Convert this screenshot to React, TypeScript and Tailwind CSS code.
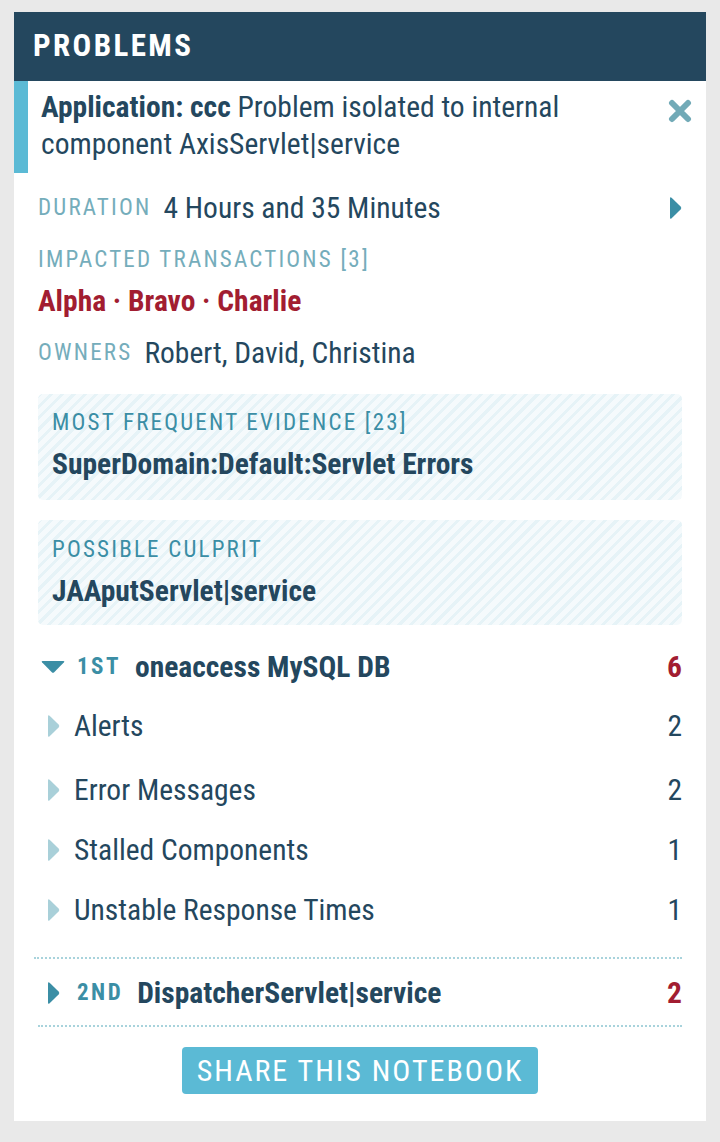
import React from "react";

const font = "font-['Roboto','Liberation_Sans',sans-serif] font-stretch-condensed";

function RightTri({ className }: { className: string }) {
  return (
    <svg width="14" height="24" viewBox="0 0 14 24" className={className}>
      <path d="M2 2.5 Q2 0.5 3.6 1.8 L12.6 10.6 Q14 12 12.6 13.4 L3.6 22.2 Q2 23.5 2 21.5 Z" fill="currentColor" />
    </svg>
  );
}

function DownTri({ className }: { className: string }) {
  return (
    <svg width="24" height="12" viewBox="0 0 24 12" className={className}>
      <path d="M1.5 0 L22.5 0 Q24 0 23 1.2 L13.2 11.2 Q12 12.3 10.8 11.2 L1 1.2 Q0 0 1.5 0 Z" fill="currentColor" />
    </svg>
  );
}

function CloseX() {
  return (
    <svg width="24" height="24" viewBox="0 0 24 24" className="text-[#72aab7]">
      <path d="M4 4 L20 20 M20 4 L4 20" stroke="currentColor" strokeWidth="6" strokeLinecap="round" />
    </svg>
  );
}

const stripes =
  "bg-[repeating-linear-gradient(135deg,#e6f3f7_0px,#e6f3f7_3px,#f5fafc_3px,#f5fafc_8px)]";

const label = "text-[23px] tracking-[2.2px]";
const big = "text-[29.5px]";

const subRows = [
  { label: "Alerts", n: 2, mt: "mt-[19px]" },
  { label: "Error Messages", n: 2, mt: "mt-[24px]" },
  { label: "Stalled Components", n: 1, mt: "mt-[20px]" },
  { label: "Unstable Response Times", n: 1, mt: "mt-[20px]" },
];

export default function App() {
  return (
    <div className={`min-h-screen bg-[#e9e9e9] pt-3 pl-[14px] ${font}`}>
      <div className="w-[692px] bg-white pb-[27px]">
        <div className="h-[69px] bg-[#24475e] px-[19px] flex items-center">
          <h1 className="text-white font-bold text-[31px] tracking-[2.4px]">PROBLEMS</h1>
        </div>

        <div className="border-l-[14px] border-[#5bbad5] h-[92px] pl-[13px] pr-[14px] pt-[8px] flex items-start justify-between">
          <p className={`text-[#24475e] ${big} leading-[37px] w-[580px]`}>
            <span className="font-bold">Application: ccc</span> Problem isolated to internal component AxisServlet|service
          </p>
          <div className="mt-[10px]">
            <CloseX />
          </div>
        </div>

        <div className="px-[24px]">
          <div className="mt-[15px] h-[40px] flex items-center justify-between">
            <div className="flex items-center gap-[12px]">
              <span className={`text-[#75adbb] ${label}`}>DURATION</span>
              <span className={`text-[#24475e] ${big}`}>4 Hours and 35 Minutes</span>
            </div>
            <RightTri className="text-[#3b8ea5]" />
          </div>

          <div className={`mt-[17px] h-[30px] flex items-center text-[#75adbb] ${label}`}>
            IMPACTED TRANSACTIONS [3]
          </div>

          <div className={`mt-[8px] h-[36px] flex items-center text-[#a21d31] ${big} font-bold`}>
            Alpha · Bravo · Charlie
          </div>

          <div className="mt-[16px] h-[36px] flex items-center gap-[12px]">
            <span className={`text-[#75adbb] ${label}`}>OWNERS</span>
            <span className={`text-[#24475e] ${big}`}>Robert, David, Christina</span>
          </div>

          <div className={`mt-[23px] h-[106px] rounded-[5px] ${stripes} px-[14px] pt-[15px]`}>
            <div className={`h-[28px] flex items-center text-[#3b8ea5] ${label}`}>
              MOST FREQUENT EVIDENCE [23]
            </div>
            <div className={`mt-[9px] h-[36px] flex items-center text-[#24475e] ${big} font-bold`}>
              SuperDomain:Default:Servlet Errors
            </div>
          </div>

          <div className={`mt-[20px] h-[105px] rounded-[5px] ${stripes} px-[14px] pt-[16px]`}>
            <div className={`h-[28px] flex items-center text-[#3b8ea5] ${label}`}>
              POSSIBLE CULPRIT
            </div>
            <div className={`mt-[9px] h-[36px] flex items-center text-[#24475e] ${big} font-bold`}>
              JAAputServlet|service
            </div>
          </div>

          <div className="mt-[22px] h-[40px] flex items-center justify-between">
            <div className="flex items-center">
              <DownTri className="text-[#3b8ea5] ml-[3px]" />
              <span className="ml-[12px] text-[#3b8ea5] text-[23px] tracking-[2.5px] font-bold">1ST</span>
              <span className={`ml-[14px] text-[#24475e] ${big} font-bold`}>oneaccess MySQL DB</span>
            </div>
            <span className={`text-[#a21d31] ${big} font-bold`}>6</span>
          </div>

          {subRows.map((r) => (
            <div key={r.label} className={`${r.mt} h-[40px] flex items-center justify-between`}>
              <div className="flex items-center">
                <RightTri className="text-[#a9d0d9] ml-[8px]" />
                <span className={`ml-[14px] text-[#24475e] ${big}`}>{r.label}</span>
              </div>
              <span className={`text-[#24475e] ${big}`}>{r.n}</span>
            </div>
          ))}

          <div className="mt-[27px] border-t-2 border-dotted border-[#a8d3dc] ml-[-4px]" />

          <div className="mt-[14px] h-[40px] flex items-center justify-between">
            <div className="flex items-center">
              <RightTri className="text-[#3b8ea5] ml-[8px]" />
              <span className="ml-[17px] text-[#3b8ea5] text-[23px] tracking-[2.5px] font-bold">2ND</span>
              <span className={`ml-[14px] text-[#24475e] ${big} font-bold`}>DispatcherServlet|service</span>
            </div>
            <span className={`text-[#a21d31] ${big} font-bold`}>2</span>
          </div>

          <div className="mt-[12px] border-t-2 border-dotted border-[#a8d3dc]" />

          <div className="mt-[20px] flex justify-center">
            <button className="h-[47px] w-[356px] rounded-[4px] bg-[#5bbad5] text-white text-[30px] tracking-[2px] flex items-center justify-center whitespace-nowrap">
              SHARE THIS NOTEBOOK
            </button>
          </div>
        </div>
      </div>
    </div>
  );
}
